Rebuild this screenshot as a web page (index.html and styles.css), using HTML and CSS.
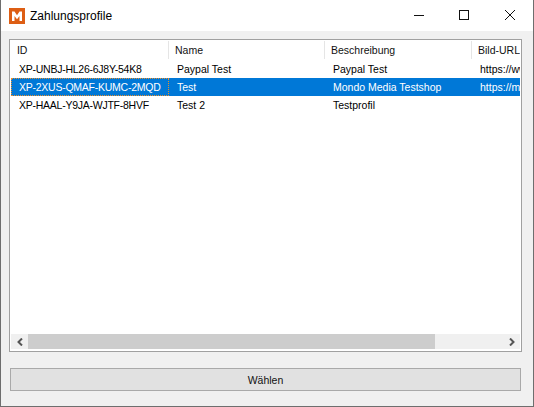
FILE: index.html
```html
<!DOCTYPE html>
<html lang="de">
<head>
<meta charset="utf-8">
<title>Zahlungsprofile</title>
<link rel="stylesheet" href="styles.css">
</head>
<body>
<div class="window">
  <div class="titlebar">
    <svg class="app-icon" viewBox="0 0 16 16" width="16" height="16"><rect width="16" height="16" fill="#dd5e14"/><path d="M3 13V3.500h2.500L8 7.200l2.500-3.700H13V13h-2.500V8L8 11.200 5.500 8v5z" fill="#fff"/></svg>
    <span class="title">Zahlungsprofile</span>
    <div class="controls">
      <svg class="ctl" viewBox="0 0 46 30" width="46" height="30"><path d="M19 15.500h10" stroke="#111" fill="none"/></svg>
      <svg class="ctl" viewBox="0 0 46 30" width="46" height="30"><rect x="18.500" y="10.500" width="9" height="9" stroke="#111" fill="none"/></svg>
      <svg class="ctl" viewBox="0 0 46 30" width="46" height="30"><path d="M18 10l10 10M28 10L18 20" stroke="#111" fill="none"/></svg>
    </div>
  </div>
  <div class="content">
    <div class="table-frame">
      <div class="table-scroll">
        <div class="row head">
          <div class="c c1">ID</div><div class="c c2">Name</div><div class="c c3">Beschreibung</div><div class="c c4">Bild-URL</div>
        </div>
        <div class="row">
          <div class="c c1">XP-UNBJ-HL26-6J8Y-54K8</div><div class="c c2">Paypal Test</div><div class="c c3">Paypal Test</div><div class="c c4">https://www.mondo-media.de</div>
        </div>
        <div class="row selected">
          <div class="c c1 focus">XP-2XUS-QMAF-KUMC-2MQD</div><div class="c c2">Test</div><div class="c c3">Mondo Media Testshop</div><div class="c c4">https://mondo-media.de</div>
        </div>
        <div class="row">
          <div class="c c1">XP-HAAL-Y9JA-WJTF-8HVF</div><div class="c c2">Test 2</div><div class="c c3">Testprofil</div><div class="c c4"></div>
        </div>
      </div>
      <div class="scrollbar">
        <div class="arrow"><svg viewBox="0 0 8 8" width="8" height="8"><path d="M6 .5L2.500 4 6 7.500" stroke="#555" stroke-width="2" fill="none"/></svg></div>
        <div class="track"><div class="thumb"></div></div>
        <div class="arrow"><svg viewBox="0 0 8 8" width="8" height="8"><path d="M2 .5L5.500 4 2 7.500" stroke="#555" stroke-width="2" fill="none"/></svg></div>
      </div>
    </div>
    <button class="choose" type="button">Wählen</button>
  </div>
</div>
</body>
</html>
```
FILE: styles.css
```css
* { box-sizing: border-box; }
html, body { margin: 0; padding: 0; }
body { width: 534px; height: 407px; overflow: hidden; font-family: "Liberation Sans", Arial, sans-serif; font-size: 10.5px; color: #000; }
.window { width: 534px; height: 407px; display: flex; flex-direction: column; border: 1px solid #6e6e6e; border-top: 0; background: #f0f0f0; }
.titlebar { height: 31px; flex: none; background: #fff; display: flex; align-items: center; padding-left: 8px; }
.app-icon { flex: none; }
.title { margin-left: 5px; font-size: 12px; }
.controls { margin-left: auto; display: flex; align-self: flex-start; }
.ctl { display: block; }
.content { flex: 1; display: flex; flex-direction: column; padding: 8px 11px 0 8px; }
.table-frame { height: 313px; flex: none; border: 1px solid #a0a0a0; background: #fff; padding: 1px 1px 2px; display: flex; flex-direction: column; }
.table-scroll { flex: 1; overflow: hidden; }
.row { display: flex; height: 18px; width: 700px; line-height: 18px; white-space: nowrap; }
.head { height: 19px; line-height: 18px; color: #111; }
.c { flex: none; overflow: hidden; }
.c1 { width: 158px; padding-left: 8px; letter-spacing: -0.25px; }
.c2 { width: 156px; padding-left: 8px; }
.c3 { width: 147px; padding-left: 8px; }
.c4 { width: 200px; padding-left: 8px; }
.head .c { height: 18px; border-right: 1px solid #e5e5e5; padding-left: 6px; }
.selected { background: #0078d7; color: #fff; }
.focus { outline: 1px dotted #e8902f; outline-offset: -1px; }
.scrollbar { height: 15px; flex: none; display: flex; background: #f0f0f0; }
.arrow { width: 17px; flex: none; display: flex; align-items: center; justify-content: center; }
.track { flex: 1; }
.thumb { width: 407px; height: 100%; background: #cdcdcd; }
.choose { margin: 16px 0 0 1px; width: 511px; height: 23px; flex: none; border: 1px solid #a9a9a9; background: #e1e1e1; font: inherit; color: #111; padding: 0; }
```
